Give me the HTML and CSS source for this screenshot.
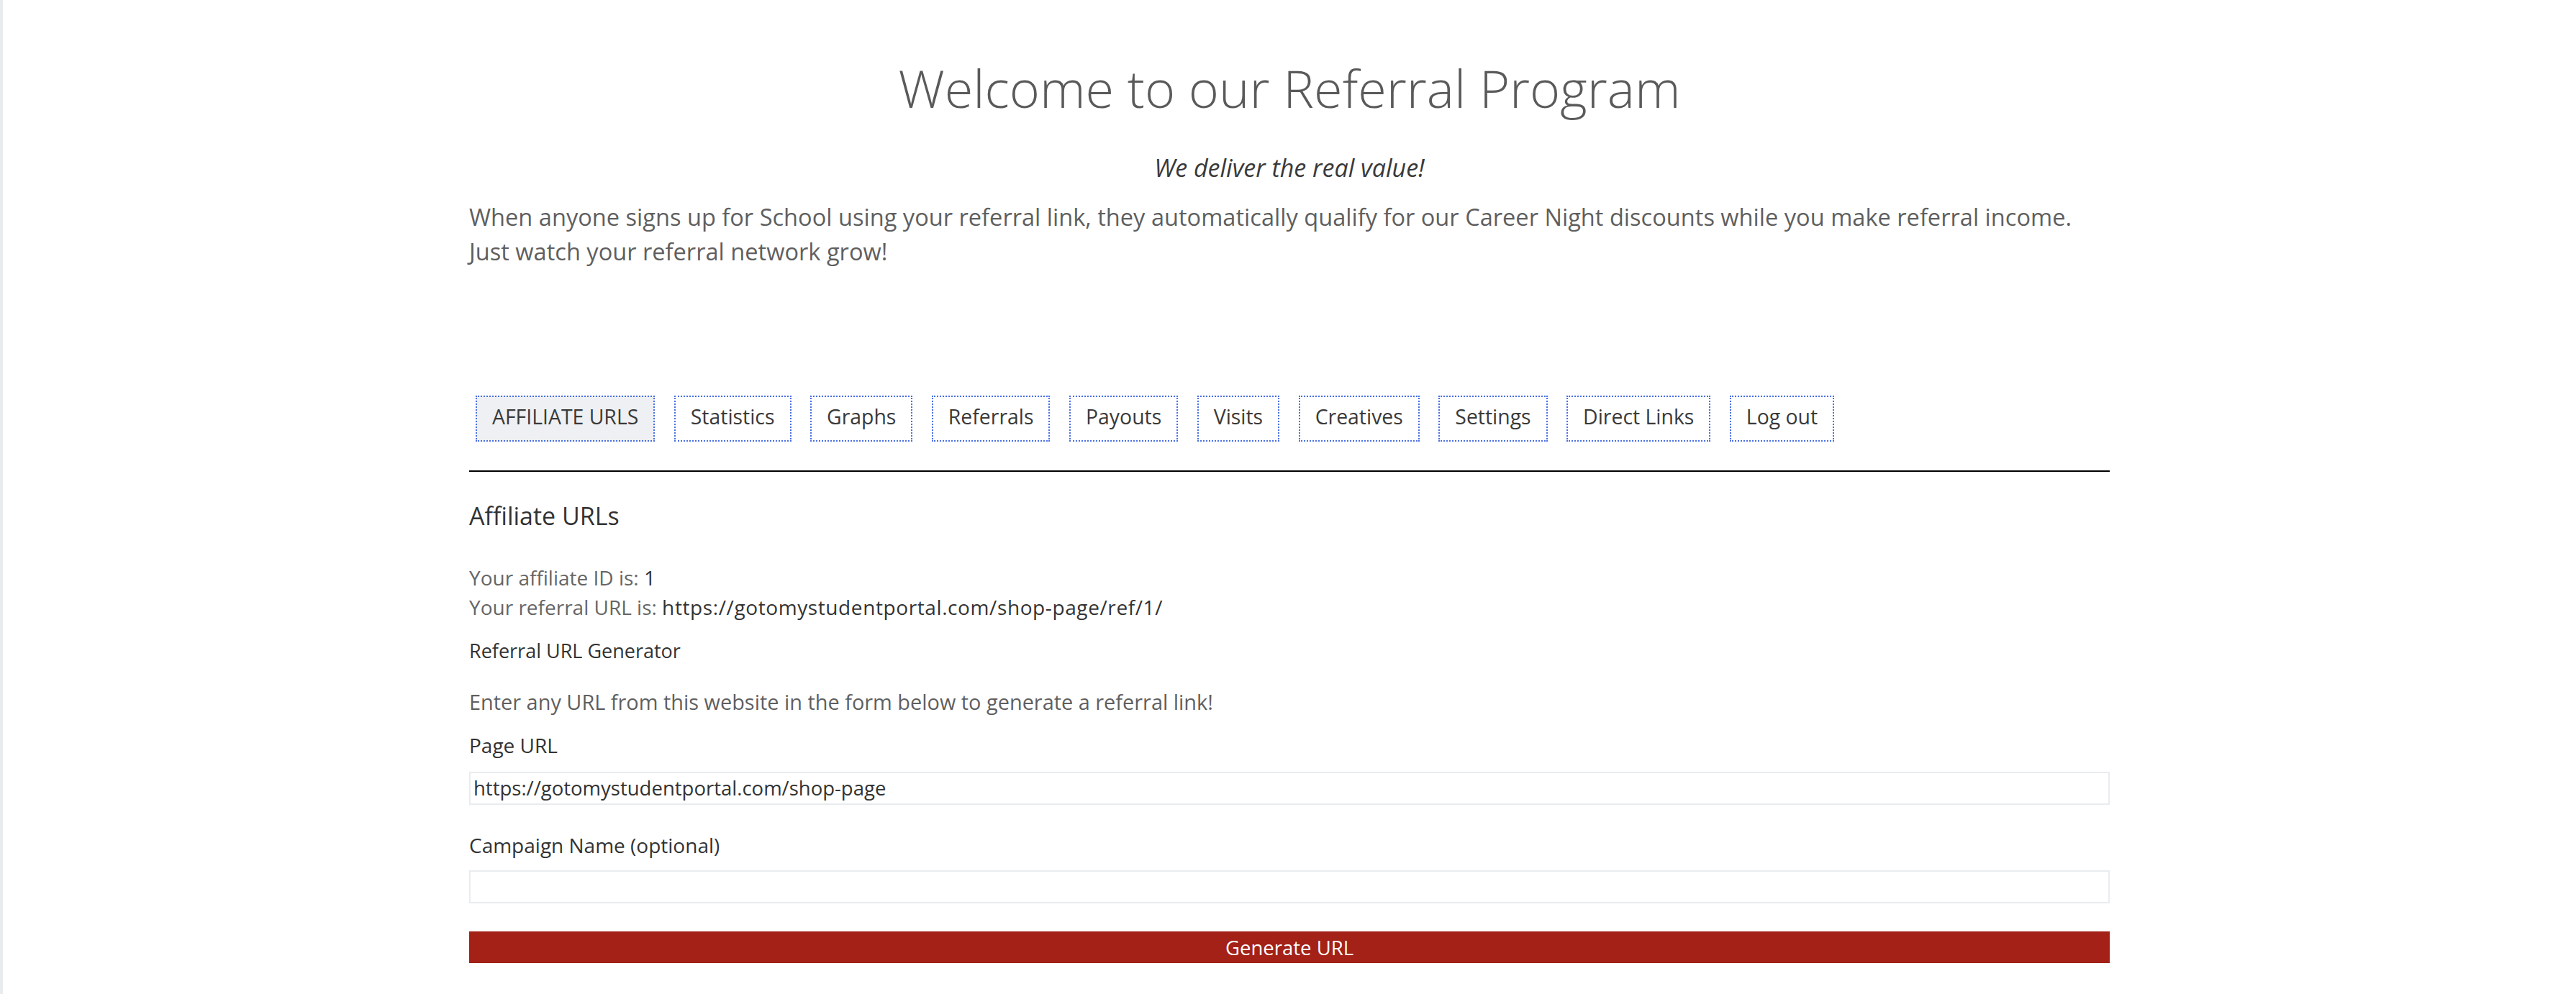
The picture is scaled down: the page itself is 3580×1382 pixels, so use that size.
FILE: index.html
```html
<!DOCTYPE html>
<html>
    <head>
        <title>Referral Program</title>
        <link rel="stylesheet" href="styles.css">
    </head>
    <body>
        <div class="page">
            <main class="wrap">
                <header class="intro">
                    <h1 class="title">Welcome to our Referral Program</h1>
                    <p class="tagline"><em>We deliver the real value!</em></p>
                    <p class="lead">When anyone signs up for School using your referral link, they automatically qualify for our Career Night discounts while you make referral income.<br>Just watch your referral network grow!</p>
                </header>

                <nav class="tabs">
                    <a class="tab active" href="#">AFFILIATE URLS</a>
                    <a class="tab" href="#">Statistics</a>
                    <a class="tab" href="#">Graphs</a>
                    <a class="tab" href="#">Referrals</a>
                    <a class="tab" href="#">Payouts</a>
                    <a class="tab" href="#">Visits</a>
                    <a class="tab" href="#">Creatives</a>
                    <a class="tab" href="#">Settings</a>
                    <a class="tab" href="#">Direct Links</a>
                    <a class="tab" href="#">Log out</a>
                </nav>

                <section class="panel">
                    <h2 class="panel-title">Affiliate URLs</h2>
                    <p class="ids">
                        Your affiliate ID is: <strong>1</strong><br>
                        Your referral URL is: <strong class="ref-url">https://gotomystudentportal.com/shop-page/ref/1/</strong>
                    </p>

                    <form class="generator" onsubmit="return false">
                        <h3 class="gen-title">Referral URL Generator</h3>
                        <p class="gen-desc">Enter any URL from this website in the form below to generate a referral link!</p>

                        <label class="field-label" for="pageUrl">Page URL</label>
                        <input class="field" type="text" id="pageUrl" value="https://gotomystudentportal.com/shop-page">

                        <label class="field-label campaign" for="campaign">Campaign Name (optional)</label>
                        <input class="field field-last" type="text" id="campaign">

                        <button class="generate" type="submit">Generate URL</button>
                    </form>
                </section>
            </main>
        </div>
    </body>
</html>
```

FILE: styles.css
```css
body {
    margin: 0;
    background: #fff;
    font-family: "Open Sans", "Liberation Sans", sans-serif;
    color: #5f5f5f;
}
.page {
    min-height: 1382px;
    border-left: 4px solid #e9ecef;
}
.wrap {
    width: 2280px;
    margin: 0 auto;
    padding-top: 79px;
}

/* intro */
.title {
    margin: 0;
    font-size: 72px;
    font-weight: 300;
    line-height: 1.2;
    text-align: center;
    color: #5a5a5a;
}
.tagline {
    margin: 44px 0 0;
    font-size: 34px;
    line-height: 48px;
    text-align: center;
    color: #3a3a3a;
}
.lead {
    margin: 21px 0 0;
    font-size: 32.6px;
    line-height: 48px;
    color: #5f5f5f;
}

/* tabs */
.tabs {
    display: flex;
    gap: 26.5px;
    margin-top: 176px;
    padding: 0 0 40px 9px;
    border-bottom: 2px solid #000;
}
.tab {
    padding: 6px 21px 12px;
    border: 2px dotted #4a6fe3;
    font-size: 28.4px;
    line-height: 42px;
    color: #3a3a3a;
    text-decoration: none;
}
.tab.active {
    background: #eef0f3;
}

/* panel */
.panel-title {
    margin: 41px 0 0;
    font-size: 34px;
    font-weight: 400;
    line-height: 1.2;
    color: #333;
}
.ids {
    margin: 45px 0 0;
    font-size: 28px;
    line-height: 41px;
    color: #666;
}
.ids strong {
    font-weight: 400;
    color: #333;
}
.ids .ref-url {
    letter-spacing: 0.6px;
}
.gen-title {
    margin: 24px 0 0;
    font-size: 27px;
    font-weight: 400;
    line-height: 1.2;
    color: #333;
}
.gen-desc {
    margin: 37px 0 0;
    font-size: 28.9px;
    line-height: 1.2;
    color: #5f5f5f;
}
.field-label {
    display: block;
    margin-top: 27px;
    font-size: 28px;
    line-height: 1.2;
    color: #333;
}
.field-label.campaign {
    margin-top: 40px;
}
.field {
    display: block;
    box-sizing: border-box;
    width: 100%;
    height: 46px;
    margin-top: 19px;
    padding: 0 4px;
    border: 2px solid #e9ecef;
    font-family: inherit;
    font-size: 27.5px;
    color: #333;
    outline: none;
}
.field-last {
    margin-top: 18px;
}
.generate {
    display: block;
    width: 100%;
    height: 44px;
    margin-top: 39px;
    border: none;
    background: #a32117;
    font-family: inherit;
    font-size: 27.5px;
    color: #fff;
    cursor: pointer;
}
```
